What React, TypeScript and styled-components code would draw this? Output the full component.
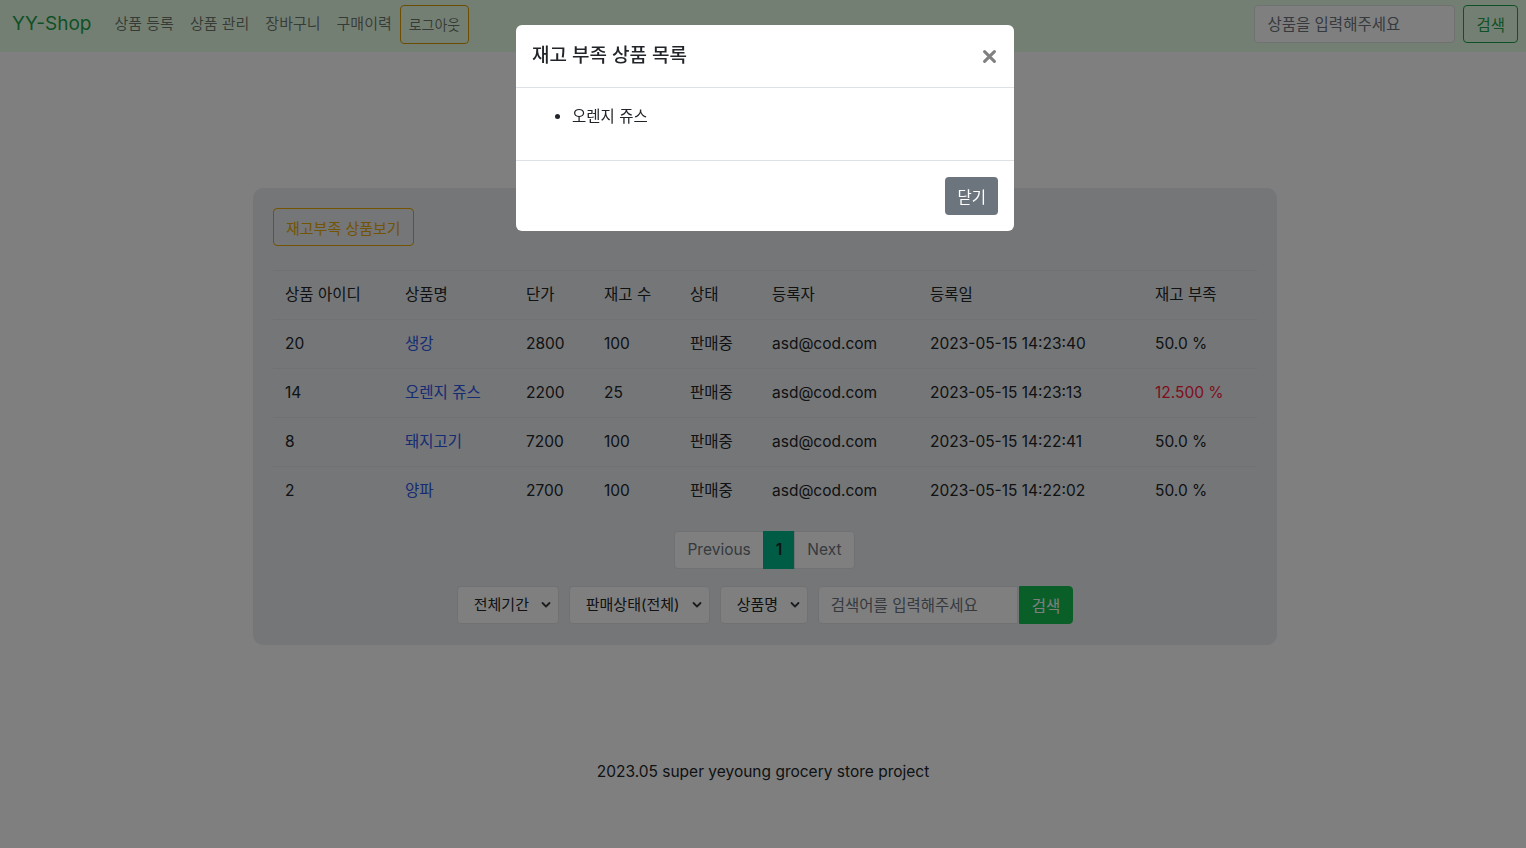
import React from "react";
import styled, { createGlobalStyle } from "styled-components";

const GlobalStyle = createGlobalStyle`
  * { box-sizing: border-box; }
  body {
    margin: 0;
    background: #ffffff;
    color: #212529;
    font-family: Inter, "Noto Sans CJK KR", sans-serif;
    font-size: 15.5px;
    line-height: 24px;
  }
`;

const Page = styled.div`
  min-height: 848px;
  display: flex;
  flex-direction: column;
`;

const NavBar = styled.nav`
  height: 52px;
  background: #e8ffe8;
  display: flex;
  align-items: center;
  padding: 0 8px 4px 12px;
`;

const Brand = styled.a`
  font-size: 19px;
  color: #1fa34a;
  margin-right: 15px;
  text-decoration: none;
`;

const NavLink = styled.a`
  color: rgba(0, 0, 0, 0.55);
  font-size: 15px;
  padding: 8px;
  text-decoration: none;
`;

const OutlineButton = styled.button<{ $tone: string; $size?: number }>`
  background: transparent;
  border: 1px solid ${(p) => p.$tone};
  color: ${(p) => p.$tone};
  border-radius: 4px;
  font-family: inherit;
  font-size: ${(p) => p.$size ?? 15.5}px;
  height: 38px;
  padding: 0 12px;
  cursor: pointer;
`;

const LogoutButton = styled(OutlineButton)`
  padding: 0 8px;
  height: 39px;
  color: rgba(0, 0, 0, 0.55);
`;

const NavSearch = styled.form`
  margin-left: auto;
  display: flex;
  gap: 8px;
`;

const TextInput = styled.input<{ $width: number; $joined?: boolean }>`
  width: ${(p) => p.$width}px;
  height: 38px;
  border: 1px solid #dee2e6;
  border-radius: ${(p) => (p.$joined ? "4px 0 0 4px" : "4px")};
  padding: 0 12px;
  font-family: inherit;
  font-size: 15.5px;
  background: #fff;
  &::placeholder { color: #6c757d; }
`;

const Main = styled.main`
  padding: 136px 0 0 4px;
`;

const Card = styled.section`
  width: 1024px;
  margin: 0 auto;
  background: #e9ecef;
  border-radius: 10px;
  padding: 20px 20px 21px;
`;

const TopRow = styled.div`
  margin-bottom: 24px;
`;

const Table = styled.table`
  width: 100%;
  border-collapse: collapse;
`;

const Th = styled.th<{ $w: number }>`
  width: ${(p) => p.$w}px;
  text-align: left;
  font-weight: 400;
  padding: 12px;
  border-top: 1px solid #dee2e6;
  border-bottom: 1px solid #dee2e6;
`;

const Td = styled.td<{ $last?: boolean }>`
  padding: 12px;
  border-bottom: ${(p) => (p.$last ? "none" : "1px solid #dee2e6")};
`;

const ItemLink = styled.a`
  color: #2b56e8;
  text-decoration: none;
`;

const Low = styled.span`
  color: #ff1a3c;
`;

const Pager = styled.ul`
  display: flex;
  justify-content: center;
  list-style: none;
  margin: 16px 0 0;
  padding: 0;
`;

const PageItem = styled.li<{ $active?: boolean; $pos?: "first" | "last" }>`
  height: 38px;
  padding: 0 12px;
  display: flex;
  align-items: center;
  color: ${(p) => (p.$active ? "#212529" : "#6c757d")};
  background: ${(p) => (p.$active ? "#00b888" : "#fff")};
  border: 1px solid ${(p) => (p.$active ? "#00b888" : "#dee2e6")};
  margin-left: -1px;
  font-weight: ${(p) => (p.$active ? 600 : 400)};
  border-radius: ${(p) =>
    p.$pos === "first" ? "4px 0 0 4px" : p.$pos === "last" ? "0 4px 4px 0" : "0"};
`;

const Filters = styled.form`
  display: flex;
  justify-content: center;
  align-items: center;
  margin-top: 17px;
`;

const SelectBox = styled.div<{ $width: number }>`
  width: ${(p) => p.$width}px;
  height: 38px;
  margin-right: 10px;
  border: 1px solid #dee2e6;
  border-radius: 4px;
  background: #fff;
  display: flex;
  align-items: center;
  padding: 0 4px 0 16px;
  font-size: 15px;
  svg { margin-left: auto; }
`;

const FillButton = styled.button`
  height: 38px;
  padding: 0 12px;
  border: 1px solid #14be50;
  background: #14be50;
  color: #fff;
  border-radius: 0 4px 4px 0;
  font-family: inherit;
  font-size: 15.5px;
  margin-left: 1px;
`;

const Footer = styled.footer`
  text-align: center;
  padding-top: 115px;
`;

const Backdrop = styled.div`
  position: fixed;
  inset: 0;
  background: rgba(0, 0, 0, 0.5);
`;

const Dialog = styled.div`
  position: fixed;
  top: 25px;
  left: 516px;
  width: 498px;
  background: #fff;
  border-radius: 6px;
  overflow: hidden;
`;

const DialogHeader = styled.div`
  height: 63px;
  display: flex;
  align-items: center;
  justify-content: space-between;
  padding: 0 18px 0 16px;
  border-bottom: 1px solid #dee2e6;
`;

const DialogTitle = styled.h5`
  margin: 0;
  font-size: 19px;
  font-weight: 500;
`;

const CloseButton = styled.button`
  border: 0;
  background: transparent;
  padding: 0;
  width: 13px;
  height: 13px;
  display: flex;
`;

const DialogBody = styled.div`
  padding: 17px 16px 16px;
  height: 73px;
  border-bottom: 1px solid #dee2e6;
  ul { margin: 0; padding-left: 40px; }
`;

const DialogFooter = styled.div`
  display: flex;
  justify-content: flex-end;
  padding: 16px;
`;

const SecondaryButton = styled.button`
  height: 38px;
  padding: 0 12px;
  border: 0;
  border-radius: 4px;
  background: #6c757d;
  color: #fff;
  font-family: inherit;
  font-size: 15.5px;
`;

const Chevron = () => (
  <svg width="16" height="12" viewBox="0 0 16 12" fill="none">
    <path d="m4.5 4 3.5 3.5 3.5-3.5" stroke="#343a40" strokeWidth="1.8" strokeLinecap="round" strokeLinejoin="round" />
  </svg>
);

const rows = [
  { id: 20, name: "생강", price: 2800, stock: 100, date: "2023-05-15 14:23:40", ratio: "50.0 %", low: false },
  { id: 14, name: "오렌지 쥬스", price: 2200, stock: 25, date: "2023-05-15 14:23:13", ratio: "12.500 %", low: true },
  { id: 8, name: "돼지고기", price: 7200, stock: 100, date: "2023-05-15 14:22:41", ratio: "50.0 %", low: false },
  { id: 2, name: "양파", price: 2700, stock: 100, date: "2023-05-15 14:22:02", ratio: "50.0 %", low: false },
];

const columns: [string, number][] = [
  ["상품 아이디", 120],
  ["상품명", 121],
  ["단가", 78],
  ["재고 수", 86],
  ["상태", 82],
  ["등록자", 158],
  ["등록일", 225],
  ["재고 부족", 114],
];

export default function App() {
  return (
    <Page>
      <GlobalStyle />
      <NavBar>
        <Brand href="#">YY-Shop</Brand>
        <NavLink href="#">상품 등록</NavLink>
        <NavLink href="#">상품 관리</NavLink>
        <NavLink href="#">장바구니</NavLink>
        <NavLink href="#">구매이력</NavLink>
        <LogoutButton $tone="#d99a00" $size={14}>
          로그아웃
        </LogoutButton>
        <NavSearch>
          <TextInput $width={201} placeholder="상품을 입력해주세요" />
          <OutlineButton $tone="#1fa34a">검색</OutlineButton>
        </NavSearch>
      </NavBar>

      <Main>
        <Card>
          <TopRow>
            <OutlineButton $tone="#e6a800" $size={15}>
              재고부족 상품보기
            </OutlineButton>
          </TopRow>
          <Table>
            <thead>
              <tr>
                {columns.map(([label, w]) => (
                  <Th key={label} $w={w}>
                    {label}
                  </Th>
                ))}
              </tr>
            </thead>
            <tbody>
              {rows.map((r, i) => {
                const last = i === rows.length - 1;
                return (
                  <tr key={r.id}>
                    <Td $last={last}>{r.id}</Td>
                    <Td $last={last}>
                      <ItemLink href="#">{r.name}</ItemLink>
                    </Td>
                    <Td $last={last}>{r.price}</Td>
                    <Td $last={last}>{r.stock}</Td>
                    <Td $last={last}>판매중</Td>
                    <Td $last={last}>asd@cod.com</Td>
                    <Td $last={last}>{r.date}</Td>
                    <Td $last={last}>{r.low ? <Low>{r.ratio}</Low> : r.ratio}</Td>
                  </tr>
                );
              })}
            </tbody>
          </Table>
          <Pager>
            <PageItem $pos="first">Previous</PageItem>
            <PageItem $active>1</PageItem>
            <PageItem $pos="last">Next</PageItem>
          </Pager>
          <Filters>
            <SelectBox $width={102}>
              전체기간
              <Chevron />
            </SelectBox>
            <SelectBox $width={141}>
              판매상태(전체)
              <Chevron />
            </SelectBox>
            <SelectBox $width={88}>
              상품명
              <Chevron />
            </SelectBox>
            <TextInput $width={200} $joined placeholder="검색어를 입력해주세요" />
            <FillButton type="button">검색</FillButton>
          </Filters>
        </Card>
      </Main>

      <Footer>2023.05 super yeyoung grocery store project</Footer>

      <Backdrop />
      <Dialog>
        <DialogHeader>
          <DialogTitle>재고 부족 상품 목록</DialogTitle>
          <CloseButton aria-label="close">
            <svg width="13" height="13" viewBox="0 0 12 12">
              <path d="M1.5 1.5 10.5 10.5M10.5 1.5 1.5 10.5" stroke="#808080" strokeWidth="2.8" strokeLinecap="round" />
            </svg>
          </CloseButton>
        </DialogHeader>
        <DialogBody>
          <ul>
            <li>오렌지 쥬스</li>
          </ul>
        </DialogBody>
        <DialogFooter>
          <SecondaryButton>닫기</SecondaryButton>
        </DialogFooter>
      </Dialog>
    </Page>
  );
}
